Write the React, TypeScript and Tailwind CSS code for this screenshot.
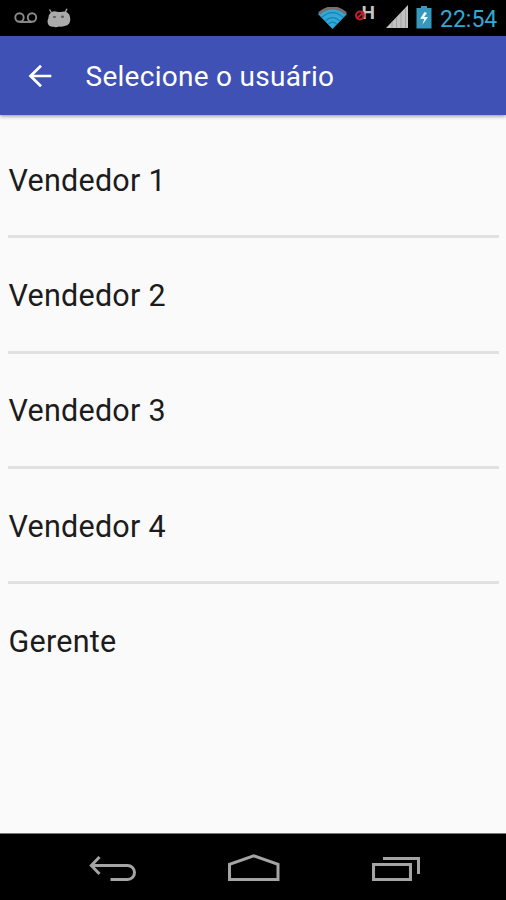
const users = ['Vendedor 1', 'Vendedor 2', 'Vendedor 3', 'Vendedor 4', 'Gerente'];

function VoicemailIcon() {
  return (
    <svg
      className="h-3 w-6"
      viewBox="0 0 24 12"
      fill="none"
      stroke="#8c8c8c"
      strokeWidth="1.900"
    >
      <circle cx="5.500" cy="5.500" r="4.200" />
      <circle cx="18" cy="5.500" r="4.200" />
      <path d="M5.500 10H18" />
    </svg>
  );
}

function DroidIcon() {
  return (
    <svg className="h-5 w-[26px]" viewBox="0 0 26 20">
      <path d="M3.500 1.500 6 5.500M21 .8 19 4.800" stroke="#a8a8a8" strokeWidth="1.400" />
      <path
        d="M5 4.600Q8 2.600 11 3.800q2.500.5 5 0 3-1 5.200.6Q24 6 24 9q1 3.500-.6 6.200-1.600 2.800-4.800 2.700-2.500 1.100-5.500.7-3 1-6 .1-4 .2-5.200-3.200-.9-3 .5-5.500Q2.500 6.500 5 4.600Z"
        fill="#ababab"
      />
      <ellipse cx="8.500" cy="9" rx="1.700" ry="1.100" fill="#5c5c5c" />
      <ellipse cx="16.500" cy="8.800" rx="1.600" ry="1.200" fill="#5c5c5c" />
    </svg>
  );
}

function WifiIcon() {
  return (
    <svg className="h-[22px] w-[29px]" viewBox="0 0 29 22" fill="none">
      <path d="M0 7Q14.500-6 29 7L14.500 22Z" fill="#2fa9dc" />
      <path d="M1.200 6.400Q14.500-4.500 27.800 6.400" stroke="#747070" strokeWidth="3.200" />
      <path
        d="M4 10.200Q14.500 1.200 25 10.200M7.500 13.800Q14.500 7.500 21.500 13.800M10.500 17Q14.500 13 18.500 17"
        stroke="#1d7fa8"
        strokeWidth="1.200"
      />
    </svg>
  );
}

// "H" (HSPA) badge with the red "no data" mark over its lower left corner
function NetworkIcon() {
  return (
    <svg className="h-7 w-7" viewBox="0 0 28 28" fill="none">
      <text
        x="11.500"
        y="19"
        fill="#c4c4c4"
        fontFamily="Roboto, sans-serif"
        fontWeight="700"
        fontSize="19"
        textLength="13.500"
        lengthAdjust="spacingAndGlyphs"
      >
        H
      </text>
      <circle cx="10" cy="15.500" r="3.900" stroke="#c51f2c" strokeWidth="2" />
      <path d="m6.500 18.500 7.500-6.500" stroke="#c51f2c" strokeWidth="1.700" />
    </svg>
  );
}

function SignalIcon() {
  return (
    <svg className="h-[23px] w-[22px]" viewBox="0 0 22 23">
      <path d="M22 0v23H0Z" fill="#c2c2c2" />
      <path d="M6 17v6M10.500 12.500V23M15 8v15M19.500 3.500V23" stroke="#a0a0a0" />
    </svg>
  );
}

function BatteryIcon() {
  return (
    <svg className="h-[23px] w-4" viewBox="0 0 16 23">
      <path d="M5 0h6v2h4.500v20.500H.5V2H5Z" fill="#3798bd" />
      <path d="M8.500 6 4.200 12.800l4 .2-1.700 5.500 5.500-7.400-3.800-.1L11 7Z" fill="#eefaff" />
    </svg>
  );
}

function StatusBar() {
  return (
    <div className="flex h-9 shrink-0 items-start bg-black">
      <div className="flex items-start gap-2 pl-3.5 pt-2">
        <div className="pt-1">
          <VoicemailIcon />
        </div>
        <DroidIcon />
      </div>
      <div className="ml-auto flex items-start pr-2">
        <div className="mr-[3px] pt-[7px]">
          <WifiIcon />
        </div>
        <div className="mr-2">
          <NetworkIcon />
        </div>
        <div className="mr-2 pt-[5px]">
          <SignalIcon />
        </div>
        <div className="mr-2 pt-1.5">
          <BatteryIcon />
        </div>
        <span className="w-[58px] whitespace-nowrap pt-[5px] text-[23px] leading-[30px] text-[#31a9d4]">
          22:54
        </span>
      </div>
    </div>
  );
}

function Toolbar() {
  return (
    <header className="z-10 flex h-[79px] shrink-0 items-center bg-[#3f51b5] pl-7 text-white shadow-[0_1px_4px_rgba(0,0,0,0.45)]">
      <svg
        className="h-6 w-6"
        viewBox="0 0 24 24"
        fill="none"
        stroke="currentColor"
        strokeWidth="2.700"
      >
        <path d="M23.300 12H3M13 1.800 2.500 12 13 22.200" />
      </svg>
      <h1 className="pl-[33.500px] pt-0.5 text-[28px] leading-9 tracking-[0.28px]">
        Selecione o usuário
      </h1>
    </header>
  );
}

function NavigationBar() {
  return (
    <nav className="flex h-[67px] shrink-0 items-start border-t border-[#777] bg-black pl-[89px] pt-[19px]">
      <svg
        className="h-8 w-12"
        viewBox="0 0 48 32"
        fill="none"
        stroke="#a4a4a4"
        strokeWidth="3"
      >
        <path d="M2 12.500h36.500a7 7 0 0 1 0 14H21.500M10.500 4 2.300 12.500l8.200 8.500" />
      </svg>
      <svg
        className="ml-[90px] h-8 w-[54px]"
        viewBox="0 0 54 32"
        fill="none"
        stroke="#a4a4a4"
        strokeWidth="3"
      >
        <path d="M2.500 26.500V11.300L26.700 2.800 51 11.300v15.200Z" />
      </svg>
      <svg
        className="ml-[90px] h-8 w-[50px]"
        viewBox="0 0 50 32"
        fill="none"
        stroke="#a4a4a4"
        strokeWidth="3"
      >
        <path d="M2.500 11.500h37v15h-37ZM12 5.500h35.500V21" />
      </svg>
    </nav>
  );
}

export default function App() {
  return (
    <div className="flex h-screen w-full flex-col bg-[#fafafa] font-[Roboto,sans-serif]">
      <StatusBar />
      <Toolbar />
      <main className="flex-1 pl-2 pr-[7px] pt-2">
        <ul>
          {users.map((user) => (
            <li
              key={user}
              className="flex h-[115.300px] items-center border-b-[3px] border-[#e1e1e1] pl-[0.500px] pt-[3px] text-[30.500px] tracking-[0.250px] text-[#1c1c1c] last:border-b-0 last:pt-px"
            >
              {user}
            </li>
          ))}
        </ul>
      </main>
      <NavigationBar />
    </div>
  );
}
